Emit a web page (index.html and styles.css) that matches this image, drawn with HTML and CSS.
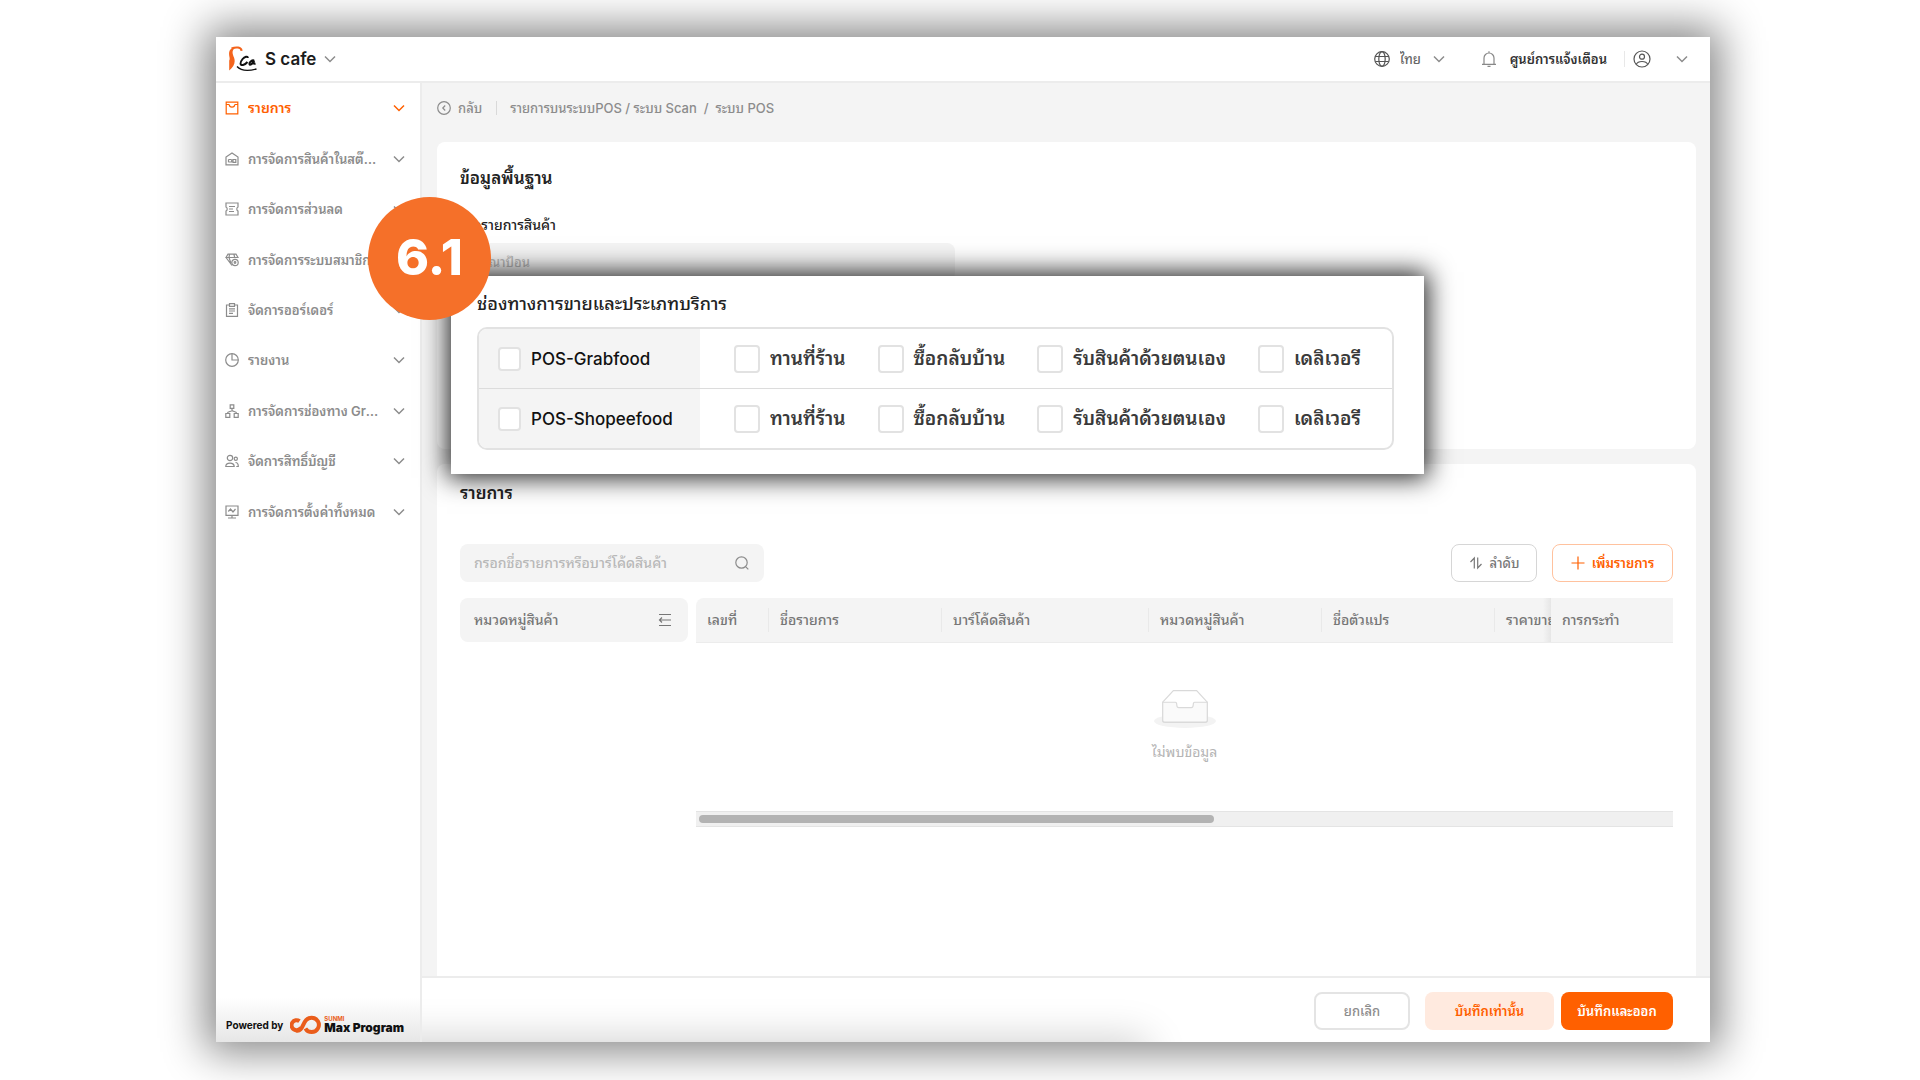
FILE: index.html
```html
<!DOCTYPE html>
<html lang="th">
<head>
<meta charset="utf-8">
<meta name="viewport" content="width=device-width, initial-scale=1">
<title>S cafe</title>
<link rel="stylesheet" href="styles.css">
</head>
<body>
<svg class="sprite" aria-hidden="true">
  <symbol id="chevron" viewBox="0 0 12 12"><path d="M1 3.500 6 8.500l5-5"/></symbol>
</svg>
<div class="window">
  <header class="topbar">
    <button class="shop" type="button">
      <svg class="shop-logo" viewBox="0 0 28 26" aria-hidden="true">
        <path d="M12.600 4.800C12.300 1 7 .8 2.500 2.400" fill="none" stroke="#f4641c" stroke-width="2"/>
        <path d="M7 1.500C2 4 3.500 8 5 11.500c1.800 4.500 0 9-4.800 13V14.500C1.500 12-.5 10 .2 6 .8 3 3 1.500 7 1.500z" fill="#f4641c"/>
        <path d="M18.800 12c0-2.200-3.200-1.500-5.200 1-3 3.700-2.600 6.500.4 6 2-.4 3.200-1.500 4.500-3M25 14.500c-2-.8-4.600 1.500-4.600 3.300 0 2 3 .6 4.700-3.300-.7 2-.8 3.700 1.400 3" fill="none" stroke="#111" stroke-width="2"/>
        <path d="M8 20.500c4 4.500 12 4.500 19.500 2.500" fill="none" stroke="#111" stroke-width="1.400"/>
      </svg>
      <span class="shop-name">S cafe</span>
      <svg class="chev"><use href="#chevron"/></svg>
    </button>
    <div class="tools">
      <label class="lang">
        <svg class="icon-m dark" viewBox="0 0 16 16"><circle cx="8" cy="8" r="7.300"/><ellipse cx="8" cy="8" rx="3.200" ry="7.300"/><path d="M1.300 5.500h13.400M1.300 10.500h13.400"/></svg>
        <select class="lang-select" aria-label="ภาษา"><option>ไทย</option></select>
        <svg class="chev"><use href="#chevron"/></svg>
      </label>
      <button class="notice" type="button">
        <svg class="icon-m" viewBox="0 0 16 16"><path d="M1 13.300h14M3 13.300V7a5 5 0 0 1 10 0v6.300M8 2V.3M6.500 15.400h3"/></svg>
        <span>ศูนย์การแจ้งเตือน</span>
      </button>
      <button class="user" type="button" aria-label="บัญชี">
        <svg class="icon-l dark" viewBox="0 0 18 18"><circle cx="9" cy="9" r="8"/><circle cx="9" cy="6.700" r="2.500"/><path d="M3.200 14.500c1-2.500 3-3 5.800-3s4.800.5 5.800 3"/></svg>
        <svg class="chev"><use href="#chevron"/></svg>
      </button>
    </div>
  </header>
  <aside class="sidebar">
    <nav class="menu">
      <a class="item active" href="#"><svg class="icon" viewBox="0 0 14 14"><path d="M1.200 1.200h11.600v11.600H1.200zM4.200 3.500c.3 3.500 5.300 3.500 5.600 0M1.200 3.500h3M9.800 3.500h3"/></svg><span>รายการ</span><svg class="chev"><use href="#chevron"/></svg></a>
      <a class="item" href="#"><svg class="icon" viewBox="0 0 14 14"><path d="M1 12.800V5L7 1l6 4v7.800zM3.500 7.500h3M3.500 10h3.200v-2.500M8 7.500h2.800v2.800H8zM3.500 7.500v2.800"/></svg><span>การจัดการสินค้าในสต๊อกสินค้า</span><svg class="chev"><use href="#chevron"/></svg></a>
      <a class="item" href="#"><svg class="icon" viewBox="0 0 14 14"><path d="M1 1h12v4c-1.600.5-1.600 3.500 0 4v4H1V9c1.600-.5 1.600-3.500 0-4zM4 4.500h6M4 7h4M4 9.500h5"/></svg><span>การจัดการส่วนลด</span><svg class="chev"><use href="#chevron"/></svg></a>
      <a class="item" href="#"><svg class="icon" viewBox="0 0 14 14"><path d="M3 1.200h8L13 4.500H1zM1 4.500l6 8M4.500 1.500 4 4.500l2 6M9 1.500l.7 3"/><circle cx="10" cy="9.500" r="3.200"/><circle cx="10" cy="9.500" r=".8"/></svg><span>การจัดการระบบสมาชิก</span><svg class="chev"><use href="#chevron"/></svg></a>
      <a class="item" href="#"><svg class="icon" viewBox="0 0 14 14"><path d="M4.500 2H1.500v11.300h11V2h-3M4.500.7h5v2.600h-5zM4 5.800h6M4 8h6M4 10.300h4"/></svg><span>จัดการออร์เดอร์</span><svg class="chev"><use href="#chevron"/></svg></a>
      <a class="item" href="#"><svg class="icon" viewBox="0 0 14 14"><circle cx="7" cy="7" r="6.300"/><path d="M7 .7V7h6.300"/></svg><span>รายงาน</span><svg class="chev"><use href="#chevron"/></svg></a>
      <a class="item" href="#"><svg class="icon" viewBox="0 0 14 14"><path d="M5.200.8h3.600v3.600H5.200zM.8 9.500h4v3.800h-4zM9.200 9.500h4v3.800h-4zM7 4.500v2.200M2.800 9.500V8.300L7 6.700l4.200 1.600v1.200"/></svg><span>การจัดการช่องทาง Grabfood</span><svg class="chev"><use href="#chevron"/></svg></a>
      <a class="item" href="#"><svg class="icon" viewBox="0 0 14 14"><circle cx="5" cy="4" r="2.700"/><circle cx="10.800" cy="4.800" r="1.600"/><path d="M.8 12.500c0-4.500 8.400-4.500 8.400 0zM10.500 8.500c2 0 2.800 1.500 2.800 4h-2"/></svg><span>จัดการสิทธิ์บัญชี</span><svg class="chev"><use href="#chevron"/></svg></a>
      <a class="item" href="#"><svg class="icon" viewBox="0 0 14 14"><path d="M1 1h12v9.300H1zM3.300 6.500 5.500 4l2.500 3 2.500-3M7 10.300v2.500M3 13h8"/></svg><span>การจัดการตั้งค่าทั้งหมด</span><svg class="chev"><use href="#chevron"/></svg></a>
    </nav>
    <div class="powered">
      <span>Powered by</span>
      <svg class="max-logo" viewBox="0 0 32 20" aria-hidden="true"><path d="M11 12.500A5 5 0 1 1 9.500 6.200M6 15.500c8.500 2 5.500-12.800 15.700-12.800a7.200 7.200 0 1 1-6.300 10.800" fill="none" stroke="#ea5d1b" stroke-width="4"/></svg>
      <span class="brand"><small>SUNMI</small><b>Max Program</b></span>
    </div>
  </aside>
  <main class="main">
    <div class="content">
      <nav class="crumbs">
        <a class="back" href="#"><svg class="icon" viewBox="0 0 14 14"><circle cx="7" cy="7" r="6.300"/><path d="M8.200 4.500 5.800 7l2.400 2.500"/></svg>กลับ</a>
        <a class="crumb" href="#">รายการบนระบบPOS / ระบบ Scan&nbsp; /&nbsp; ระบบ POS</a>
      </nav>
      <section class="card basic">
        <h2>ข้อมูลพื้นฐาน</h2>
        <label class="field-label" for="product-name">ชื่อรายการสินค้า</label>
        <input class="field" id="product-name" type="text" placeholder="กรุณาป้อน">
      </section>
      <section class="card list">
        <h2>รายการ</h2>
        <div class="actions">
          <div class="search">
            <input type="text" aria-label="ค้นหา" placeholder="กรอกชื่อรายการหรือบาร์โค้ดสินค้า">
            <svg class="icon" viewBox="0 0 14 14"><circle cx="6.500" cy="6.500" r="5.700"/><path d="m10.800 10.800 2.500 2.500"/></svg>
          </div>
          <div class="buttons">
            <button class="btn order" type="button"><svg class="icon" viewBox="0 0 14 14"><path d="M1.500 6 5.300 2v10.500M8.700 1.500V12l3.800-4"/></svg>ลำดับ</button>
            <button class="btn add" type="button"><svg class="icon" viewBox="0 0 14 14"><path d="M7 .5v13M.5 7h13"/></svg>เพิ่มรายการ</button>
          </div>
        </div>
        <div class="grid">
          <div class="category">หมวดหมู่สินค้า<svg class="icon" viewBox="0 0 14 14"><path d="M1 1.500h12M5 7h8M1 12.500h12M4 4.500 1.500 7 4 9.500M1.500 7H5"/></svg></div>
          <div class="table-box">
            <table class="table">
              <thead><tr><th class="c-no">เลขที่</th><th class="c-name">ชื่อรายการ</th><th class="c-code">บาร์โค้ดสินค้า</th><th class="c-name">หมวดหมู่สินค้า</th><th class="c-name">ชื่อตัวแปร</th><th class="c-price">ราคาขาย</th><th class="c-act">การกระทำ</th></tr></thead>
              <tbody><tr><td colspan="7">
                <svg class="empty-icon" viewBox="0 0 64 41" aria-hidden="true"><ellipse cx="32" cy="33" rx="32" ry="7" fill="#f3f3f3"/><path d="M9 13.500 20 1.500h24l11 12V32a2 2 0 0 1-2 2H11a2 2 0 0 1-2-2z" fill="#fff" stroke="#d9d9d9"/><path d="M9 13.500h13c1 0 1.500 1 1.500 2.500s.8 3 2 3h13c1.200 0 2-1.500 2-3s.5-2.500 1.500-2.500h13V32a2 2 0 0 1-2 2H11a2 2 0 0 1-2-2z" fill="#fafafa" stroke="#d9d9d9"/></svg>
                <span class="empty-text">ไม่พบข้อมูล</span>
              </td></tr></tbody>
            </table>
            <div class="scroll"><div class="thumb"></div></div>
          </div>
        </div>
      </section>
    </div>
    <footer class="footer">
      <button class="btn cancel" type="button">ยกเลิก</button>
      <button class="btn save" type="button">บันทึกเท่านั้น</button>
      <button class="btn exit" type="button">บันทึกและออก</button>
    </footer>
  </main>
  <section class="callout">
    <h2>ช่องทางการขายและประเภทบริการ</h2>
    <div class="channels">
      <div class="channel">
        <label class="source"><input type="checkbox">POS-Grabfood</label>
        <div class="services">
          <label><input type="checkbox">ทานที่ร้าน</label>
          <label><input type="checkbox">ซื้อกลับบ้าน</label>
          <label><input type="checkbox">รับสินค้าด้วยตนเอง</label>
          <label><input type="checkbox">เดลิเวอรี</label>
        </div>
      </div>
      <div class="channel">
        <label class="source"><input type="checkbox">POS-Shopeefood</label>
        <div class="services">
          <label><input type="checkbox">ทานที่ร้าน</label>
          <label><input type="checkbox">ซื้อกลับบ้าน</label>
          <label><input type="checkbox">รับสินค้าด้วยตนเอง</label>
          <label><input type="checkbox">เดลิเวอรี</label>
        </div>
      </div>
    </div>
  </section>
  <div class="badge">6.1</div>
</div>
</body>
</html>
```
FILE: styles.css
```css
* { box-sizing: border-box; }
body { margin: 0; padding: 37px 210px 38px 216px; background: #fff; color: #333; font: 500 14px/20px Inter, "Noto Sans Thai Looped", "Noto Looped Thai", Loma, Garuda, Laksaman, Waree, FreeSans, "Noto Serif Thai", sans-serif; }
button, input, select { font: inherit; color: inherit; border: 0; padding: 0; background: none; }
a { color: inherit; text-decoration: none; }
h2 { margin: 0; font-size: 17px; line-height: 24px; font-weight: 600; color: #222; }
svg { flex: none; fill: none; stroke: currentColor; stroke-width: 1.2; }
.sprite { display: none; }
.chev { width: 12px; height: 12px; stroke-width: 1.5; color: #8c8c8c; }
.icon { width: 14px; height: 14px; }
.icon-m { width: 16px; height: 16px; }
.icon-l { width: 18px; height: 18px; }
.dark { color: #555; }
.shop-logo, .max-logo, .empty-icon { stroke: none; }

.window { position: relative; display: grid; grid-template: 46px 1fr / 206px 1fr; min-height: calc(100vh - 75px); background: #fff; box-shadow: 0 0 40px 10px rgba(0, 0, 0, .48); }
.topbar { grid-column: 1 / 3; display: flex; justify-content: space-between; align-items: center; padding: 0 22px 0 13px; border-bottom: 2px solid #ececec; }
.shop { display: flex; align-items: center; gap: 8px; }
.shop-logo { width: 28px; height: 26px; }
.shop-name { font-size: 17px; font-weight: 600; color: #1c1c1c; }
.tools, .lang, .notice, .user { display: flex; align-items: center; font-size: 13px; }
.lang { gap: 10px; margin-right: 36px; color: #666; }
.lang-select { appearance: none; width: 23px; }
.notice { gap: 13px; padding-right: 17px; border-right: 1px solid #e8e8e8; height: 16px; color: #888; }
.notice span { font-weight: 600; color: #333; }
.user { gap: 25px; padding-left: 8px; }

.sidebar { display: flex; flex-direction: column; justify-content: space-between; border-right: 2px solid #ececec; background: linear-gradient(to top, #e6e6e6, #fff 44px); }
.menu { display: grid; grid-template-columns: minmax(0, 1fr); grid-auto-rows: 1fr; height: 454px; }
.item { display: flex; align-items: center; padding: 0 15px 0 9px; color: #8c8c8c; font-size: 13px; font-weight: 600; }
.item span { flex: 1; margin: 0 12px 0 9px; min-width: 0; overflow: hidden; white-space: nowrap; text-overflow: ellipsis; }
.active, .active .chev { color: #ff6000; }
.active { font-size: 14px; }
.powered { display: flex; align-items: center; padding: 0 10px 7px; font-size: 10px; line-height: 20px; font-weight: 700; color: #111; white-space: nowrap; }
.max-logo { width: 32px; height: 20px; margin: 0 2px 0 7px; }
.brand { display: flex; flex-direction: column; }
.brand small { font-size: 6px; line-height: 6px; color: #ea5d1b; }
.brand b { font-size: 12px; line-height: 12px; font-weight: 900; }

.main { display: flex; flex-direction: column; min-width: 0; background: #f4f4f4; }
.content { flex: 1; display: flex; flex-direction: column; padding: 0 14px 0 15px; }
.crumbs { display: flex; align-items: center; height: 50px; color: #8c8c8c; font-size: 13px; margin-bottom: 9px; }
.back { display: flex; align-items: center; gap: 7px; padding-right: 14px; margin-right: 13px; border-right: 1px solid #d9d9d9; line-height: 14px; }
.card { background: #fff; border-radius: 8px; padding: 0 23px; }
.basic { min-height: 307px; margin-bottom: 15px; padding-top: 24px; display: flex; flex-direction: column; align-items: flex-start; }
.field-label { margin: 25px 0 8px; padding-left: 5px; color: #222; }
.field { width: 495px; height: 38px; padding: 0 14px; border-radius: 8px; background: #f4f4f4; font-size: 13px; }
::placeholder { color: #b8b8b8; opacity: 1; }
.list { flex: 1; padding-top: 17px; border-radius: 8px 8px 0 0; }
.actions { display: flex; justify-content: space-between; margin: 39px 0 16px; }
.search { display: flex; align-items: center; justify-content: space-between; width: 304px; height: 38px; padding: 0 15px 0 14px; border-radius: 8px; background: #f4f4f4; color: #8c8c8c; }
.search input { flex: 1; min-width: 0; }
.buttons { display: flex; gap: 15px; }
.btn { display: flex; align-items: center; justify-content: center; gap: 7px; height: 38px; border-radius: 8px; white-space: nowrap; font-size: 13px; }
.order { width: 86px; border: 1px solid #d6d6d6; color: #777; }
.add { width: 121px; border: 1px solid #ffc29e; color: #ff6000; font-weight: 600; }
.grid { display: flex; gap: 8px; }
.category { display: flex; align-items: center; justify-content: space-between; width: 228px; height: 44px; padding: 0 16px 0 14px; border-radius: 8px; background: #f4f4f4; color: #777; }
.table-box { flex: 1; min-width: 0; }
.table { width: 100%; table-layout: fixed; border-collapse: collapse; }
.table th { height: 44px; padding: 0 11px; background: linear-gradient(#e9e9e9, #e9e9e9) right / 1px 24px no-repeat #f4f4f4; border-bottom: 1px solid #ececec; text-align: left; font-weight: 500; color: #777; white-space: nowrap; overflow: hidden; }
.table th:first-child { border-radius: 8px 0 0 0; }
.c-no { width: 73px; }
.c-name { width: 173px; }
.c-code { width: 207px; }
.table .c-price { width: 56px; padding-right: 0; background: linear-gradient(to left, #e6e6e6, #f4f4f4 8px); }
.table .c-act { background: #f4f4f4; }
.table td { height: 169px; padding: 0 0 2px; text-align: center; vertical-align: middle; }
.empty-icon { display: block; width: 62px; height: 40px; margin: 0 auto 13px; }
.empty-text { color: #b5b5b5; font-weight: 400; }
.scroll { height: 16px; padding: 3px; background: #f0f0f0; border: solid #e4e4e4; border-width: 1px 0; }
.thumb { width: 53%; height: 8px; border-radius: 4px; background: #b3b3b3; }
.footer { position: relative; display: flex; justify-content: flex-end; height: 66px; padding: 14px 37px 0; border-top: 2px solid #ececec; background: #fff; overflow: hidden; }
.footer::before { content: ""; position: absolute; left: -60px; right: 44%; top: 100%; height: 60px; box-shadow: 0 0 40px 4px rgba(0, 0, 0, .18); }
.cancel { width: 96px; margin-right: 15px; border: 2px solid #e4e4e4; color: #8c8c8c; }
.save { width: 129px; margin-right: 7px; background: #ffeadf; color: #ff6000; font-weight: 600; }
.exit { width: 112px; background: #ff6000; color: #fff; font-weight: 600; }

.callout { position: absolute; left: 235px; top: 239px; right: 286px; height: 198px; padding: 16px 30px 0 26px; background: #fff; box-shadow: 0 0 24px 4px rgba(0, 0, 0, .85); }
.callout h2 { font-size: 18px; font-weight: 500; margin-bottom: 11px; }
.channels { border: 2px solid #e2e2e2; border-radius: 10px; overflow: hidden; }
.channel { display: flex; height: 59px; }
.channel + .channel { border-top: 1px solid #dcdcdc; height: 60px; }
.channel label { display: flex; align-items: center; gap: 10px; white-space: nowrap; }
.source { width: 221px; padding-left: 19px; background: #f4f4f4; color: #111; font-size: 17px; }
.services { display: flex; align-items: center; gap: 32px; padding-left: 34px; color: #3a3a3a; font-size: 19px; font-weight: 600; }
.channel input { appearance: none; flex: none; width: 26px; height: 28px; margin: 0; border: 2px solid #e2e2e2; border-radius: 4px; background: #fff; }
.source input { width: 23px; height: 24px; }
.badge { position: absolute; left: 152px; top: 160px; width: 123px; height: 123px; border-radius: 50%; background: #f57029; color: #fff; font: 800 50px/121px Inter, sans-serif; text-align: center; }
```
